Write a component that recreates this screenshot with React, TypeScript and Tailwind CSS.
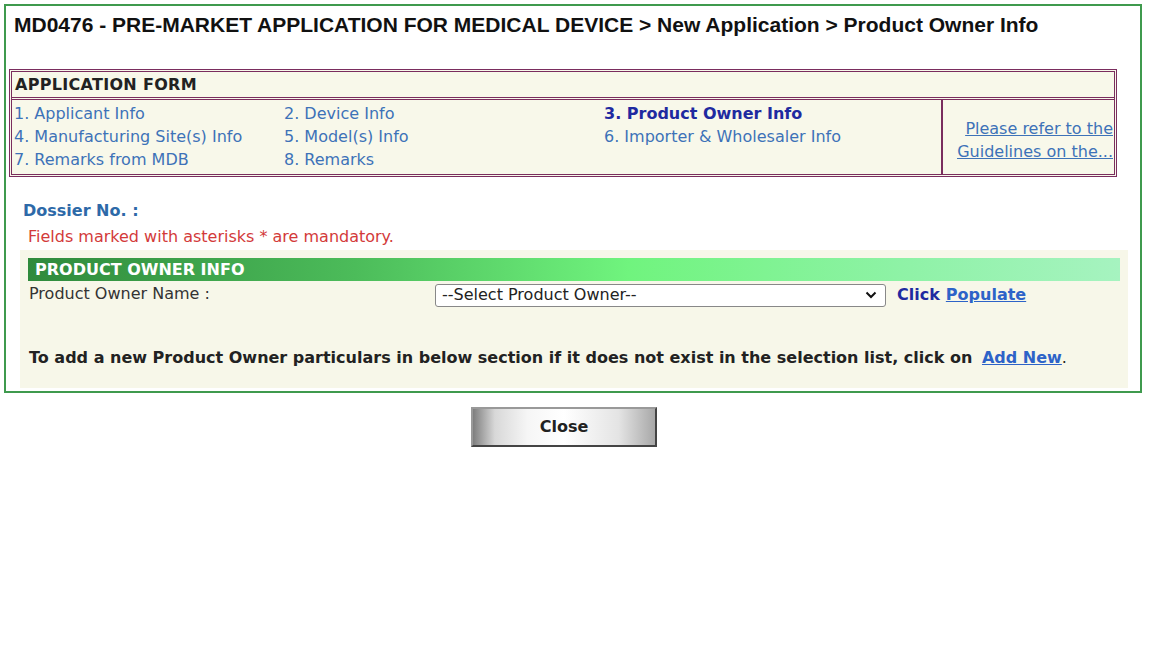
import React from 'react';

const verdana = { fontFamily: '"DejaVu Sans", Verdana, sans-serif' };

const navItems = [
  ['1. Applicant Info', '2. Device Info', '3. Product Owner Info'],
  ['4. Manufacturing Site(s) Info', '5. Model(s) Info', '6. Importer & Wholesaler Info'],
  ['7. Remarks from MDB', '8. Remarks', ''],
];

const App: React.FC = () => {
  return (
    <div className="w-[1159px] h-[648px] bg-white text-[16px]" style={verdana}>
      <div className="pt-1 pl-1">
        <div className="w-[1138px] border-2 border-[#3f9a4e] pb-[3px]">
          {/* page title */}
          <h1 className="pl-2 pt-[3px] h-[63px] text-[21px] font-bold text-[#111] font-['Liberation_Sans',Arial,sans-serif]">
            MD0476 - PRE-MARKET APPLICATION FOR MEDICAL DEVICE &gt; New Application &gt; Product Owner Info
          </h1>

          {/* application form nav */}
          <div className="ml-[3px] w-[1108px] border-[3px] border-double border-[#7a2d5e] bg-[#f8f8ea]">
            <div className="h-[28px] flex items-center pl-[3px] font-bold text-[#222] tracking-[0.3px] border-b-[3px] border-double border-[#7a2d5e]">
              APPLICATION FORM
            </div>
            <div className="flex">
              <div className="flex-1 pl-[2px] pt-[3px] pb-[3px]">
                {navItems.map((row, i) => (
                  <div key={i} className="flex h-[22.7px] items-center">
                    <span className="w-[270px] text-[#3d72b8]">{row[0]}</span>
                    <span className="w-[320px] text-[#3d72b8]">{row[1]}</span>
                    <span className={i === 0 ? 'font-bold text-[#1f2aa0]' : 'text-[#3d72b8]'}>{row[2]}</span>
                  </div>
                ))}
              </div>
              <div className="w-[173px] border-l-2 border-[#7a2d5e] flex flex-col justify-center items-end pt-[6px] pr-[1px] text-[#3d72b8] underline leading-[23px]">
                <a href="#">Please refer to the</a>
                <a href="#">Guidelines on the...</a>
              </div>
            </div>
          </div>

          {/* dossier */}
          <div className="pl-[17px] pt-[24px] font-bold text-[#2d69a8] leading-[20px]">Dossier No. :</div>
          <div className="pl-[22px] pt-[6px] text-[#d33a3a] leading-[20px]">
            Fields marked with asterisks * are mandatory.
          </div>

          {/* product owner section */}
          <div className="ml-[14px] mt-[3px] w-[1108px] bg-[#f7f7e9] pt-[8px] pb-[20px] px-[8px]">
            <div className="h-[23px] flex items-center pl-[7px] text-white font-bold bg-[linear-gradient(90deg,#2f8a3c_0%,#4cbc5a_30%,#70f47e_55%,#8ef2a6_80%,#a6f3c0_100%)]">
              PRODUCT OWNER INFO
            </div>
            <div className="flex items-center h-[28px] pl-[1px] text-[#333]">
              <span className="w-[406px] -mt-[2px]">Product Owner Name :</span>
              <div className="w-[451px] h-[23px] border border-[#888] rounded-[3px] bg-white flex items-center justify-between pl-[6px] pr-[8px] text-[#222]">
                <span>--Select Product Owner--</span>
                <svg width="12" height="8" viewBox="0 0 12 8">
                  <path d="M1.5 1.5 L6 6 L10.5 1.5" fill="none" stroke="#111" strokeWidth="2" />
                </svg>
              </div>
              <span className="ml-[11px] font-bold text-[#1f2aa0]">Click</span>
              <a href="#" className="ml-[6px] font-bold text-[#2d63c8] underline">Populate</a>
            </div>
            <div className="pt-[39px] pl-[1px] font-bold text-[#222] leading-[20px]">
              To add a new Product Owner particulars in below section if it does not exist in the selection list, click on{' '}
              <a href="#" className="ml-[4px] text-[#2d63c8] underline">Add New</a>
              <span className="font-normal">.</span>
            </div>
          </div>
        </div>
      </div>

      {/* close */}
      <div className="pt-[14px] pl-[471px]">
        <button className="w-[186px] h-[40px] border-2 border-[#444] border-t-[#999] border-l-[#999] bg-[linear-gradient(90deg,#7e7e7e_0%,#d8d8d8_12%,#f6f6f6_30%,#ffffff_50%,#e4e4e4_80%,#a8a8a8_100%)] font-bold text-[16px] text-[#222]">
          Close
        </button>
      </div>
    </div>
  );
};

export default App;
